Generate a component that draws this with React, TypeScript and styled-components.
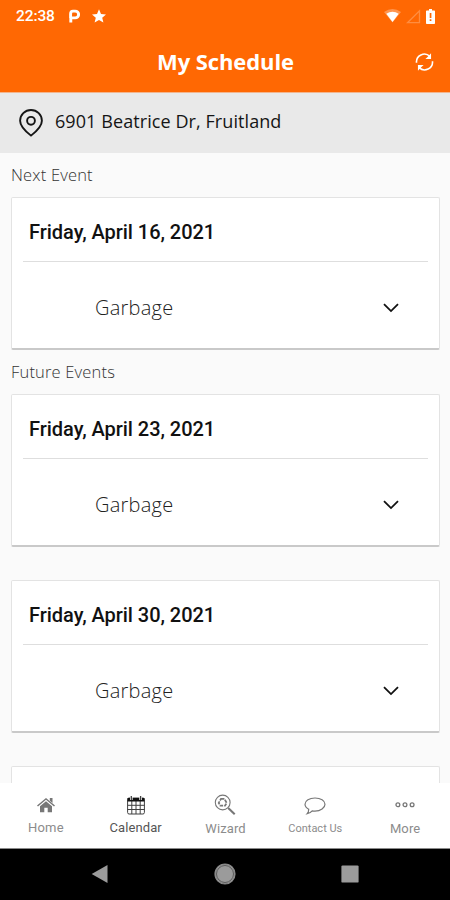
import React from "react";
import styled, { createGlobalStyle } from "styled-components";

const GlobalStyle = createGlobalStyle`
  * { box-sizing: border-box; }
  body { margin: 0; background: #000; }
  svg { display: block; flex: none; }
`;

const Screen = styled.div`
  width: 450px;
  height: 900px;
  display: flex;
  flex-direction: column;
  overflow: hidden;
  background: #fafafa;
  font-family: "Open Sans", sans-serif;
`;

const StatusBar = styled.div`
  height: 32px;
  flex: none;
  display: flex;
  align-items: center;
  padding: 0 14px 0 16px;
  background: #ff6803;
  color: #fff;
`;

const Clock = styled.span`
  width: 52px;
  font: 500 15.5px/32px Roboto, sans-serif;
  letter-spacing: -0.1px;
`;

const StatusIcons = styled.div<{ $gap: number; $end?: boolean }>`
  display: flex;
  align-items: center;
  gap: ${(p) => p.$gap}px;
  margin-left: ${(p) => (p.$end ? "auto" : "0")};
`;

const Header = styled.header`
  height: 61px;
  flex: none;
  display: grid;
  grid-template-columns: 60px 1fr 60px;
  align-items: center;
  background: #ff6803;
  border-bottom: 1px solid #f3b58d;
  color: #fff;
`;

const Title = styled.h1`
  grid-column: 2;
  margin: 0;
  padding: 0 0 2px 1px;
  text-align: center;
  font: 700 22px/58px "Open Sans", sans-serif;
  letter-spacing: -0.1px;
`;

const RefreshButton = styled.button`
  display: flex;
  justify-content: flex-end;
  padding: 0 16px 0 0;
  border: 0;
  background: none;
  color: #fff;
`;

const AddressBar = styled.div`
  height: 60px;
  flex: none;
  display: flex;
  align-items: center;
  gap: 12px;
  padding-left: 19px;
  background: #e9e9e9;
  color: #151515;
`;

const Address = styled.span`
  font-size: 18px;
  line-height: 24px;
  letter-spacing: 0.08px;
  padding-bottom: 5px;
`;

const Schedule = styled.main`
  flex: 1;
  min-height: 0;
  overflow: hidden;
  padding: 0 10px 0 11px;
`;

const SectionLabel = styled.h2`
  margin: 0;
  height: 44px;
  font-size: 16.5px;
  font-weight: 300;
  line-height: 44px;
  letter-spacing: 0.18px;
  color: #333;
`;

const CardList = styled.div`
  display: flex;
  flex-direction: column;
  gap: 33px;
`;

const Card = styled.article`
  height: 153px;
  flex: none;
  padding: 0 11px;
  background: #fff;
  border: 1px solid #e3e3e3;
  border-bottom: 2px solid #c9c9c9;
  border-radius: 2px;
`;

const EventDate = styled.div`
  height: 64px;
  padding-left: 6px;
  border-bottom: 1px solid #dedede;
  font: 500 20px/68px Roboto, sans-serif;
  letter-spacing: -0.04px;
  color: #111;
`;

const EventRow = styled.div`
  height: 86px;
  display: flex;
  align-items: center;
  justify-content: space-between;
  padding: 5px 28px 0 72px;
`;

const EventName = styled.span`
  font-size: 20px;
  font-weight: 300;
  line-height: 28px;
  letter-spacing: 0.25px;
  color: #222;
`;

const TabBar = styled.nav`
  height: 66px;
  flex: none;
  display: grid;
  grid-template-columns: repeat(5, 1fr);
  padding-left: 1px;
  background: #fff;
  border-bottom: 1px solid #8a8a8a;
`;

const Tab = styled.a<{ $active?: boolean }>`
  display: flex;
  flex-direction: column;
  align-items: center;
  padding-top: 11px;
  color: ${(p) => (p.$active ? "#404040" : "#777")};
`;

const TabLabel = styled.span<{ $size: number; $drop: number; $track: number; $active?: boolean }>`
  margin-top: ${(p) => p.$drop}px;
  font: 400 ${(p) => p.$size}px/16px Roboto, sans-serif;
  letter-spacing: ${(p) => p.$track}px;
  color: ${(p) => (p.$active ? "#555" : "#8c8c8c")};
  white-space: nowrap;
`;

const SystemNav = styled.div`
  height: 51px;
  flex: none;
  display: flex;
  align-items: center;
  justify-content: space-between;
  padding: 0 91px 1px;
  background: #000;
`;

const ParkingIcon = () => (
  <svg width="12" height="14" viewBox="0 0 12 14" fill="none" stroke="#fff" strokeWidth="2.9">
    <path d="M2.8 13.5V8.9H7.2A3.4 3.4 0 0 0 7.2 2.1H5Q2.6 2.1 2.6 5V9" />
  </svg>
);

const StarIcon = () => (
  <svg width="14" height="14" viewBox="0 0 14 14" fill="#fff">
    <path d="M7 .3 9 5l5 .4-3.8 3.3 1.2 4.9L7 11l-4.4 2.6 1.2-4.9L0 5.4 5 5z" />
  </svg>
);

const WifiIcon = () => (
  <svg width="17" height="14" viewBox="0 0 17 14" fill="#fff">
    <path opacity=".3" d="M0 3Q8.5-3 17 3L8.5 13.5z" />
    <path d="M2.3 4.8Q8.5.8 14.7 4.8L8.5 13z" />
  </svg>
);

const SignalIcon = () => (
  <svg width="15" height="15" viewBox="0 0 15 15" fill="none" stroke="#ff8d40" strokeWidth="1.3">
    <path d="M1.5 13.7H13.5V1.7z" />
  </svg>
);

const BatteryIcon = () => (
  <svg width="10" height="15" viewBox="0 0 10 15">
    <path fill="#fff" d="M3 0h3v1.5h2.2q.8 0 .8.8v11.9q0 .8-.8.8H.8q-.8 0-.8-.8V2.3q0-.8.8-.8H3z" />
    <path fill="#ff6803" d="M3.7 4h1.7v5H3.7zM3.7 10.3h1.7V12H3.7z" />
  </svg>
);

const RefreshIcon = () => (
  <svg width="19" height="20" viewBox="0 0 20 20" fill="none" stroke="currentColor" strokeWidth="1.7">
    <path d="M1.6 10.8A8.3 8.3 0 0 1 15.6 4M18.4 9.2A8.3 8.3 0 0 1 4.4 16" />
    <path fill="currentColor" stroke="none" d="M16.9.8v6h-6l2.3-2zM3.1 19.2v-6h6l-2.3 2z" />
  </svg>
);

const PinIcon = () => (
  <svg width="24" height="28" viewBox="0 0 24 28" fill="none" stroke="currentColor" strokeWidth="1.9">
    <path d="M12 26.6C8.8 24 1.1 18.2 1.1 11.7a10.9 10.7 0 0 1 21.8 0C22.9 18.2 15.2 24 12 26.6z" />
    <circle cx="12" cy="11.8" r="3.9" />
  </svg>
);

const ChevronIcon = () => (
  <svg width="17" height="10" viewBox="0 0 17 10" fill="none" stroke="#111" strokeWidth="1.8">
    <path d="M1 1.1 8 8.1l7-7" />
  </svg>
);

const HomeIcon = () => (
  <svg width="20" height="22" viewBox="0 0 20 22" fill="currentColor">
    <path d="M1 11.5 10 3.9l9 7.6-1 1L10 5.8 2 12.5z" />
    <path d="M13.8 4h2.7v5l-2.7-2.3z" />
    <path d="M4 12.3 10 7.3l6 5v5.9h-4.3v-4.4H8.3v4.4H4z" />
  </svg>
);

const CalendarIcon = () => (
  <svg width="20" height="22" viewBox="0 0 20 22" fill="none" stroke="currentColor" strokeWidth="1">
    <rect x="1.6" y="4" width="16.8" height="16" rx="1.5" />
    <path d="M1.5 11.3h17M1.5 15.5h17M5.8 7v13M10 7v13M14.2 7v13" />
    <path fill="#111" stroke="none" d="M1.5 4h17v3.5h-17z" />
    <path stroke="#fff" strokeWidth="2.6" d="M5.3 2v4M14.6 2v4" />
    <path strokeWidth="1.3" d="M5.3 2v4M14.6 2v4" />
  </svg>
);

const WizardIcon = () => (
  <svg width="22" height="22" viewBox="0 0 22 22" fill="none" stroke="currentColor">
    <circle cx="8.7" cy="8.5" r="7.4" strokeWidth="1.1" />
    <path strokeWidth="1.7" strokeDasharray="3.4 1" d="M7 4.9h3.4l2.3 4-1.6 2.8H6.3L4.7 8.9z" />
    <path strokeWidth="2.1" d="m14.2 14 6.5 6.2" />
  </svg>
);

const ChatIcon = () => (
  <svg width="22" height="22" viewBox="0 0 22 22" fill="none" stroke="currentColor" strokeWidth="1.2">
    <path d="M4.7 15.2C2.3 14 1 12.1 1 10.3 1 6.8 5.4 4 11 4s10 2.8 10 6.3-4.4 6.8-10 6.8c-1 0-2-.1-2.8-.3-1.3 1.5-2.8 2.5-5 2.9 1-1 1.5-2.6 1.5-4.5z" />
  </svg>
);

const MoreIcon = () => (
  <svg width="20" height="22" viewBox="0 0 20 22" fill="none" stroke="currentColor" strokeWidth="1.3">
    <circle cx="2.9" cy="10.8" r="1.9" />
    <circle cx="10" cy="10.8" r="1.9" />
    <circle cx="17.1" cy="10.8" r="1.9" />
  </svg>
);

const BackIcon = () => (
  <svg width="17" height="20" viewBox="0 0 17 20" fill="#9b9b9b">
    <path d="M16.5 1v18L.7 10z" />
  </svg>
);

const HomeCircleIcon = () => (
  <svg width="22" height="22" viewBox="0 0 22 22">
    <circle cx="11" cy="11" r="10" fill="#9b9b9b" stroke="#8b8b8b" strokeWidth="1.2" />
    <circle cx="11" cy="11" r="8.5" fill="none" stroke="#555" strokeWidth=".9" />
  </svg>
);

const RecentsIcon = () => (
  <svg width="18" height="18" viewBox="0 0 18 18">
    <rect x=".4" y=".4" width="17.2" height="17.2" rx="1.2" fill="#9b9b9b" />
  </svg>
);

const futureDates = ["Friday, April 23, 2021", "Friday, April 30, 2021"];

const tabs = [
  { label: "Home", Icon: HomeIcon, size: 13, drop: 4, track: 0.2 },
  { label: "Calendar", Icon: CalendarIcon, size: 13, drop: 4, track: 0.1, active: true },
  { label: "Wizard", Icon: WizardIcon, size: 13, drop: 5, track: 0.1 },
  { label: "Contact Us", Icon: ChatIcon, size: 11, drop: 5, track: 0 },
  { label: "More", Icon: MoreIcon, size: 13, drop: 5, track: 0.1 },
];

const EventCard = ({ date }: { date: string }) => (
  <Card>
    <EventDate>{date}</EventDate>
    <EventRow>
      <EventName>Garbage</EventName>
      <ChevronIcon />
    </EventRow>
  </Card>
);

export default function App() {
  return (
    <>
      <GlobalStyle />
      <Screen>
        <StatusBar>
          <Clock>22:38</Clock>
          <StatusIcons $gap={12}>
            <ParkingIcon />
            <StarIcon />
          </StatusIcons>
          <StatusIcons $gap={5} $end>
            <WifiIcon />
            <SignalIcon />
            <BatteryIcon />
          </StatusIcons>
        </StatusBar>
        <Header>
          <Title>My Schedule</Title>
          <RefreshButton aria-label="Refresh">
            <RefreshIcon />
          </RefreshButton>
        </Header>
        <AddressBar>
          <PinIcon />
          <Address>6901 Beatrice Dr, Fruitland</Address>
        </AddressBar>
        <Schedule>
          <SectionLabel>Next Event</SectionLabel>
          <EventCard date="Friday, April 16, 2021" />
          <SectionLabel>Future Events</SectionLabel>
          <CardList>
            {futureDates.map((date) => (
              <EventCard key={date} date={date} />
            ))}
            <Card />
          </CardList>
        </Schedule>
        <TabBar>
          {tabs.map(({ label, Icon, size, drop, track, active }) => (
            <Tab key={label} $active={active}>
              <Icon />
              <TabLabel $size={size} $drop={drop} $track={track} $active={active}>
                {label}
              </TabLabel>
            </Tab>
          ))}
        </TabBar>
        <SystemNav>
          <BackIcon />
          <HomeCircleIcon />
          <RecentsIcon />
        </SystemNav>
      </Screen>
    </>
  );
}
